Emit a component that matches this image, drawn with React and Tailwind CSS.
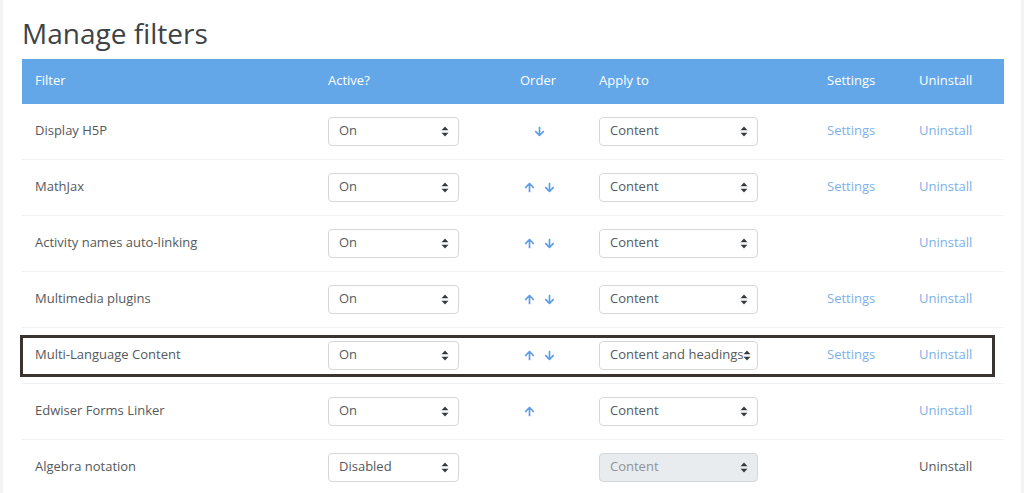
import React from 'react';
import { FaArrowUp, FaArrowDown } from 'react-icons/fa';

const filters = [
    { name: 'Display H5P', active: 'On', up: false, down: true, apply: 'Content', settings: true },
    { name: 'MathJax', active: 'On', up: true, down: true, apply: 'Content', settings: true },
    { name: 'Activity names auto-linking', active: 'On', up: true, down: true, apply: 'Content', settings: false },
    { name: 'Multimedia plugins', active: 'On', up: true, down: true, apply: 'Content', settings: true },
    { name: 'Multi-Language Content', active: 'On', up: true, down: true, apply: 'Content and headings', settings: true, marked: true },
    { name: 'Edwiser Forms Linker', active: 'On', up: true, down: false, spacer: true, apply: 'Content', settings: false },
    { name: 'Algebra notation', active: 'Disabled', up: false, down: false, apply: 'Content', settings: false, disabled: true },
];

const cols = 'grid grid-cols-[293px_175px_96px_228px_92px_98px] items-center';

const Caret = () => (
    <svg width="8" height="11" viewBox="0 0 8 11" className="shrink-0">
        <path d="M4 0.5 L7.5 4.3 L0.5 4.3 Z" fill="#373a3c" />
        <path d="M4 10.5 L7.5 6.7 L0.5 6.7 Z" fill="#373a3c" />
    </svg>
);

const FakeSelect = ({ value, width, disabled }) => (
    <div
        className={`flex items-center justify-between h-[29px] pl-[10px] pr-[9px] rounded-[4px] border border-[#d5d8da] ${disabled ? 'bg-[#e9ecef] text-[#8e9397]' : 'bg-white text-[#55595c]'} ${width}`}
    >
        <span className="whitespace-nowrap">{value}</span>
        <Caret />
    </div>
);

const App = () => {
    return (
        <div className="flex w-full min-h-screen bg-white" style={{ fontFamily: '"Open Sans", "Noto Sans", sans-serif' }}>
            <div className="w-[3px] shrink-0 bg-[#f1f3f5]"></div>
            <div className="flex-1 pl-[19px]">
                <h2 className="pt-[17px] mb-[8px] text-[28px] leading-[1.2] text-[#3e4346] font-normal">Manage filters</h2>

                <div className="w-[982px] text-[13px]">
                    <div className={`${cols} h-[45px] bg-[#63a7e9] text-white`}>
                        <div className="pl-[13px]">Filter</div>
                        <div className="pl-[13px]">Active?</div>
                        <div className="text-center">Order</div>
                        <div className="pl-[13px]">Apply to</div>
                        <div className="pl-[13px]">Settings</div>
                        <div className="pl-[13px]">Uninstall</div>
                    </div>

                    {filters.map((f) => (
                        <div key={f.name} className={`${cols} relative h-[56px] border-b border-[#eff1f3] text-[#55595c]`}>
                            <div className="pl-[13px]">{f.name}</div>
                            <div className="pl-[13px]">
                                <FakeSelect value={f.active} width="w-[131px]" />
                            </div>
                            <div className="flex justify-center gap-[9px] text-[#5c9de6] pl-[2px]">
                                {f.up && <FaArrowUp size={11} />}
                                {f.down && <FaArrowDown size={11} />}
                                {f.spacer && <span className="w-[11px]"></span>}
                            </div>
                            <div className="pl-[13px]">
                                <FakeSelect value={f.apply} width="w-[159px]" disabled={f.disabled} />
                            </div>
                            <div className="pl-[13px] text-[#7db0ec]">{f.settings ? 'Settings' : ''}</div>
                            <div className={`pl-[13px] ${f.disabled ? 'text-[#55595c]' : 'text-[#7db0ec]'}`}>Uninstall</div>
                            {f.marked && (
                                <div className="absolute -left-[2px] top-[7px] w-[975px] h-[42px] border-[3px] border-[#3a3431] pointer-events-none"></div>
                            )}
                        </div>
                    ))}
                </div>
            </div>
            <div className="w-[3px] shrink-0 bg-[#f1f3f5]"></div>
        </div>
    );
};

export default App;
